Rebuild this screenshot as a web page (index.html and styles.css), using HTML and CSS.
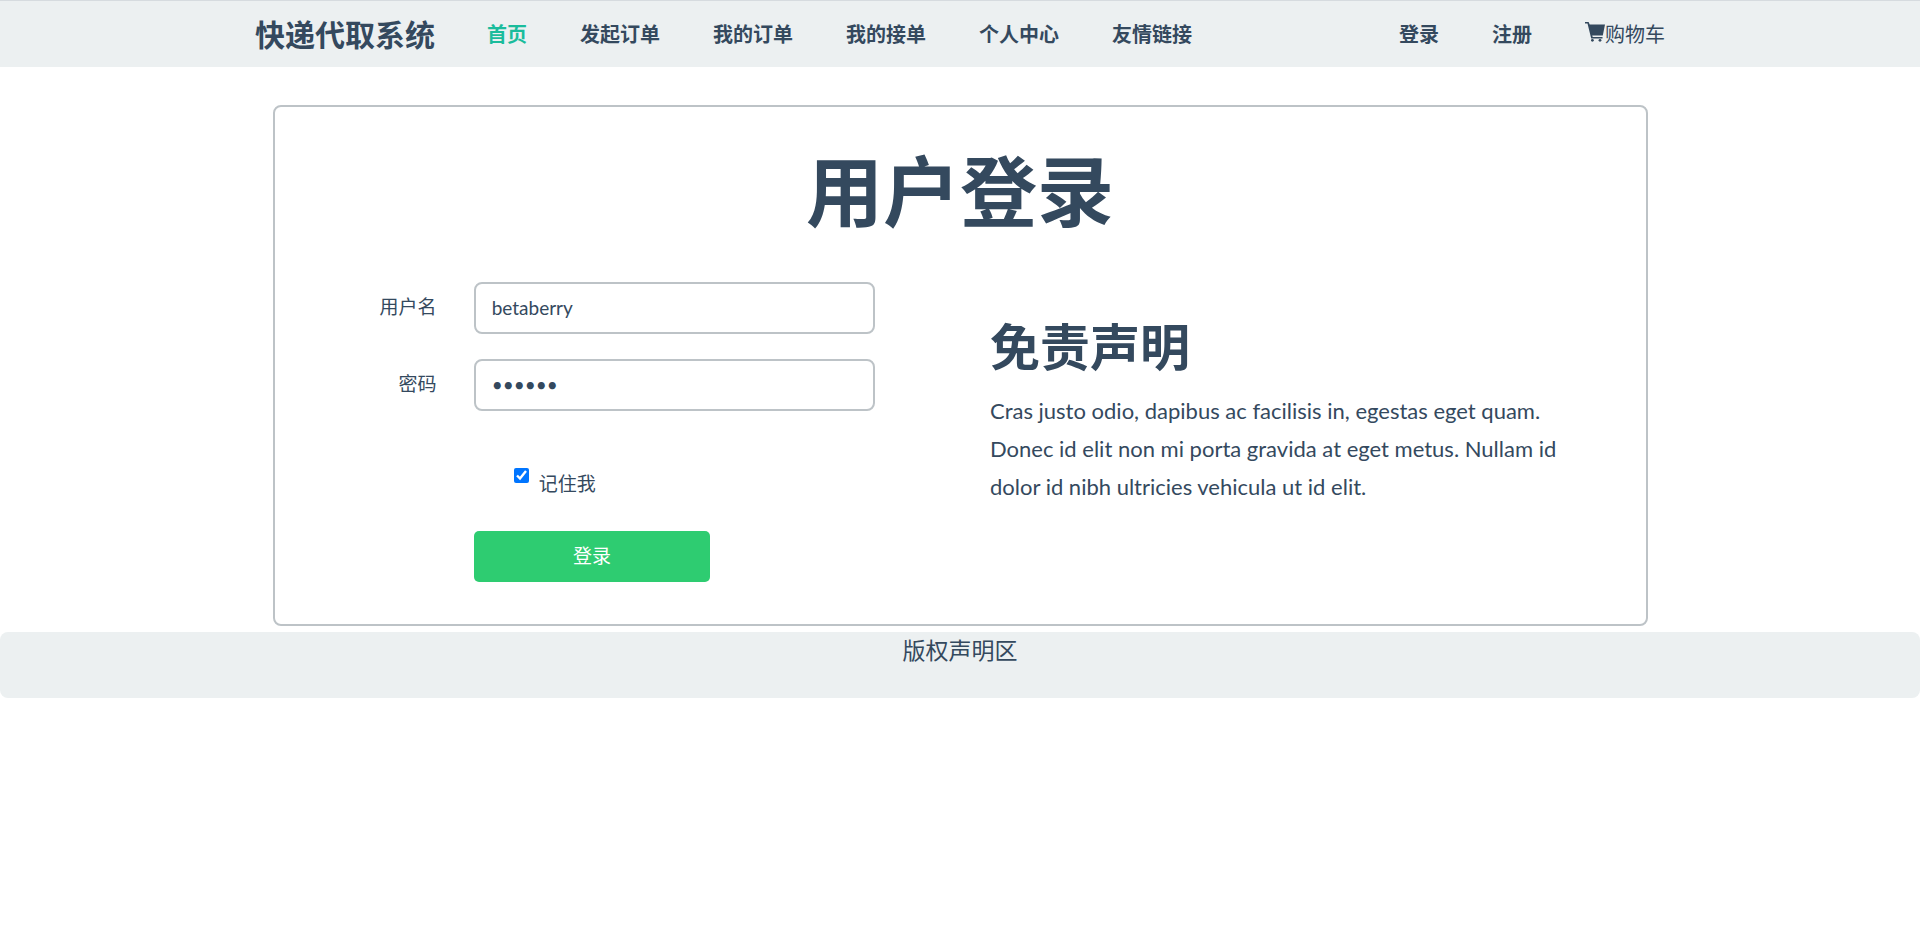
FILE: index.html
```html
<!DOCTYPE html>
<html lang="zh-CN">
<head>
<meta charset="utf-8">
<title>用户登录</title>
<link rel="stylesheet" href="styles.css">
</head>
<body>
<header class="navbar">
  <nav class="navbar-inner">
    <a class="brand" href="#">快递代取系统</a>
    <ul class="nav">
      <li><a class="active" href="#">首页</a></li>
      <li><a href="#">发起订单</a></li>
      <li><a href="#">我的订单</a></li>
      <li><a href="#">我的接单</a></li>
      <li><a href="#">个人中心</a></li>
      <li><a href="#">友情链接</a></li>
    </ul>
    <ul class="nav nav-right">
      <li><a href="#">登录</a></li>
      <li><a href="#">注册</a></li>
      <li><a class="cart" href="#"><svg class="cart-icon" viewBox="0 0 20 20" aria-hidden="true"><path d="M0 0h3.6l1.1 2.4H20l-2.2 11H7.2l.5 1.6h9.8v1.4H6.2L2.5 1.6H0z"/><circle cx="7.4" cy="18.3" r="1.4"/><circle cx="15" cy="18.3" r="1.4"/></svg>购物车</a></li>
    </ul>
  </nav>
</header>
<main class="panel">
  <h1 class="title">用户登录</h1>
  <div class="columns">
    <form class="login">
      <label class="label" for="user">用户名</label>
      <input class="field" id="user" type="text" value="betaberry">
      <label class="label" for="pass">密码</label>
      <input class="field" id="pass" type="password" value="123456">
      <div class="remember">
        <input class="check" id="remember" type="checkbox" checked>
        <label for="remember">记住我</label>
      </div>
      <button class="submit" type="button">登录</button>
    </form>
    <section class="notice">
      <h2 class="notice-title">免责声明</h2>
      <p class="notice-text">Cras justo odio, dapibus ac facilisis in, egestas eget quam. Donec id elit non mi porta gravida at eget metus. Nullam id dolor id nibh ultricies vehicula ut id elit.</p>
    </section>
  </div>
</main>
<footer class="footer">版权声明区</footer>
</body>
</html>
```
FILE: styles.css
```css
* {
  box-sizing: border-box;
}

body {
  margin: 0;
  background: #fff;
  color: #34495e;
  font-family: Lato, "Noto Sans CJK SC", sans-serif;
  font-size: 19px;
}

a {
  color: inherit;
  text-decoration: none;
}

.navbar {
  background: #ecf0f1;
  border-top: 1px solid #d6dbdf;
}

.navbar-inner {
  display: flex;
  align-items: center;
  max-width: 1410px;
  height: 66px;
  margin: 0 auto;
  padding-bottom: 2px;
}

.brand {
  font-size: 30px;
  font-weight: 700;
  margin-right: 52px;
}

.nav {
  display: flex;
  gap: 53px;
  margin: 0;
  padding: 0;
  list-style: none;
  font-size: 20px;
  font-weight: 700;
}

.nav-right {
  margin-left: auto;
}

.active {
  color: #1abc9c;
}

.cart {
  display: flex;
  font-weight: 400;
}

.cart-icon {
  width: 20px;
  height: 20px;
  margin-top: 3px;
  fill: currentColor;
}

.panel {
  max-width: 1375px;
  margin: 38px auto 6px;
  padding: 30px 0 42px;
  border: 2px solid #bdc3c7;
  border-radius: 8px;
}

.title {
  margin: 0;
  font-size: 77px;
  line-height: 108px;
  font-weight: 700;
  text-align: center;
}

.columns {
  display: grid;
  grid-template-columns: 1fr 1fr;
  margin-top: 37px;
}

.login {
  display: grid;
  grid-template-columns: 162fr 401fr 85fr;
  column-gap: 37px;
  row-gap: 25px;
  margin-right: -37px;
}

.label {
  grid-column: 1;
  padding-top: 11px;
  line-height: 28px;
  text-align: right;
}

.field {
  grid-column: 2;
  width: 100%;
  height: 52px;
  padding: 0 16px 2px;
  border: 2px solid #bdc3c7;
  border-radius: 8px;
  background: #fff;
  color: inherit;
  font: inherit;
}

.remember {
  grid-column: 2;
  display: flex;
  gap: 10px;
  padding: 32px 0 6px 40px;
  line-height: 32px;
}

.check {
  width: 15px;
  height: 15px;
  margin: 0;
  accent-color: #0075ff;
}

.submit {
  grid-column: 2;
  width: 59%;
  height: 51px;
  padding: 0 0 4px;
  border: 0;
  border-radius: 5px;
  background: #2ecc71;
  color: #fff;
  font: inherit;
}

.notice {
  padding: 37px 60px 0 30px;
}

.notice-title {
  margin: 0;
  font-size: 50px;
  line-height: 56px;
  font-weight: 700;
}

.notice-text {
  margin: 17px 0 0;
  font-size: 22px;
  line-height: 38px;
}

.footer {
  min-height: 66px;
  border-radius: 8px;
  background: #ecf0f1;
  font-size: 23px;
  line-height: 36px;
  text-align: center;
}
```
